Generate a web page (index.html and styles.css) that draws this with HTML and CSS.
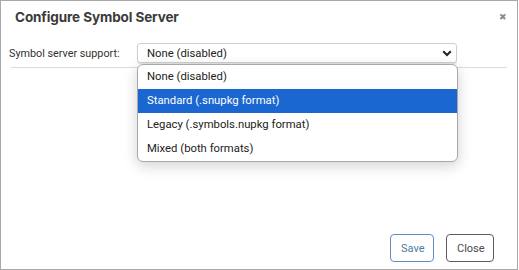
FILE: index.html
```html
<!DOCTYPE html>
<html>
<head>
<meta charset="utf-8">
<link rel="stylesheet" href="styles.css">
</head>
<body>
<div class="dialog">
  <div class="header">
    <h1 class="title">Configure Symbol Server</h1>
    <span class="close-x">&#x2716;</span>
  </div>
  <div class="field">
    <label class="label">Symbol server support:</label>
    <div class="select-wrap">
      <div class="select">
        <span>None (disabled)</span>
        <svg class="chev" width="10" height="7" viewBox="0 0 10 7"><path d="M1.2 1.2 L5 5 L8.8 1.2" fill="none" stroke="#222" stroke-width="2"/></svg>
      </div>
      <ul class="menu">
        <li>None (disabled)</li>
        <li class="active">Standard (.snupkg format)</li>
        <li>Legacy (.symbols.nupkg format)</li>
        <li>Mixed (both formats)</li>
      </ul>
    </div>
  </div>
  <div class="rule"></div>
  <div class="spacer"></div>
  <div class="footer">
    <button class="btn btn-save">Save</button>
    <button class="btn btn-close">Close</button>
  </div>
</div>
</body>
</html>
```
FILE: styles.css
```css
html, body { margin: 0; padding: 0; background: #fff; }
body { width: 519px; height: 270px; overflow: hidden; font-family: Roboto, "Noto Sans", sans-serif; color: #333; }
.dialog {
  box-sizing: border-box;
  width: 518px; height: 270px;
  border: 1px solid #a9a9a9;
  display: flex; flex-direction: column;
}
.header { display: flex; align-items: center; justify-content: space-between; height: 32px; padding: 0 10px 0 14px; }
.title { margin: 0; font-family: Inter, Roboto, sans-serif; font-size: 13.5px; font-weight: 700; color: #3a3a3a; letter-spacing: -0.1px; }
.close-x { font-size: 9px; color: #8a8a8a; margin-top: -1px; }
.field { display: flex; align-items: flex-start; padding: 10px 0 0 8px; }
.label { font-size: 10.8px; color: #333; width: 128px; padding-top: 4px; }
.select-wrap { position: relative; }
.select {
  box-sizing: border-box; width: 320px; height: 20px;
  border: 1px solid #cfcfcf; border-radius: 3px;
  box-shadow: 0 1px 1px rgba(0,0,0,0.12);
  display: flex; align-items: center; justify-content: space-between;
  padding: 0 4px 0 9px; font-size: 11.3px; color: #222;
}
.chev { display: block; }
.menu {
  position: absolute; left: 0; top: 21px; margin: 0; padding: 0; list-style: none;
  box-sizing: border-box; width: 321px;
  background: #fff; border: 1px solid #a8a8a8; border-radius: 6px;
  box-shadow: 0 4px 14px rgba(0,0,0,0.18);
  overflow: hidden; z-index: 5;
}
.menu li { height: 24px; line-height: 24px; padding-left: 9px; font-size: 11.3px; color: #222; }
.menu li.active { background: #1a67d2; color: #fff; }
.rule { height: 1px; background: #dcdcdc; margin: 4px 10px 0 10px; }
.spacer { flex: 1; }
.footer { display: flex; justify-content: flex-end; gap: 12px; padding: 0 23px 7px 0; }
.btn {
  box-sizing: border-box; height: 28px; background: #fff; border-radius: 4px;
  font-family: Roboto, "Noto Sans", sans-serif; font-size: 11px; padding: 0 10px;
}
.btn-save { width: 44px; border: 1px solid #5e8fbf; color: #4f7aa3; }
.btn-close { width: 48px; border: 1px solid #5b5b5b; color: #4a4a4a; }
```
